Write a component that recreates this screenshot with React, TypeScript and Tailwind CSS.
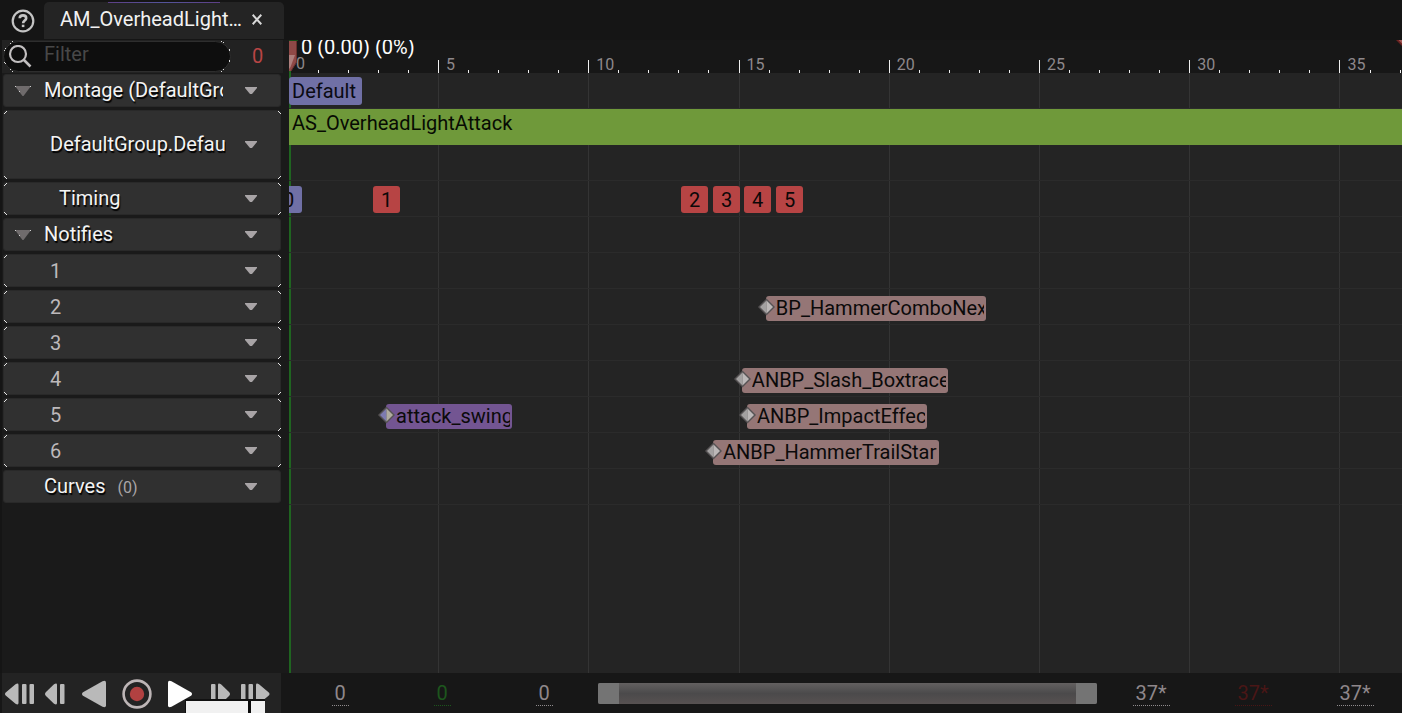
import React from "react";

const FRAMES_VISIBLE = 37.04;
const at = (frame: number) => `${((frame - 0.04) / FRAMES_VISIBLE) * 100}%`;

const MAJOR = [5, 10, 15, 20, 25, 30, 35];
const MINOR = Array.from({ length: 37 }, (_, i) => i + 1).filter((f) => f % 5 !== 0);

function Corners() {
  return (
    <span aria-hidden="true" className="pointer-events-none absolute -inset-px">
      <svg className="absolute left-0 top-0" width="4" height="4" shapeRendering="crispEdges" fill="#e6e6e6">
        <path d="M3 1h1v1h-1zM2 2h1v1h-1zM1 3h1v1h-1z" />
      </svg>
      <svg className="absolute right-0 top-0" width="4" height="4" shapeRendering="crispEdges" fill="#e6e6e6">
        <path d="M1 1h1v1h-1zM2 2h1v1h-1zM3 3h1v1h-1z" />
      </svg>
      <svg className="absolute bottom-0 left-0" width="4" height="4" shapeRendering="crispEdges" fill="#e6e6e6">
        <path d="M1 1h1v1h-1zM2 2h1v1h-1zM3 3h1v1h-1z" />
      </svg>
      <svg className="absolute bottom-0 right-0" width="4" height="4" shapeRendering="crispEdges" fill="#e6e6e6">
        <path d="M3 1h1v1h-1zM2 2h1v1h-1zM1 3h1v1h-1z" />
      </svg>
    </span>
  );
}

type Row = {
  label: string;
  kind: "group" | "slot" | "timing" | "track" | "curves";
  note?: string;
};

const ROWS: Row[] = [
  { label: "Montage (DefaultGroup)", kind: "group" },
  { label: "DefaultGroup.DefaultSlot", kind: "slot" },
  { label: "Timing", kind: "timing" },
  { label: "Notifies", kind: "group" },
  { label: "1", kind: "track" },
  { label: "2", kind: "track" },
  { label: "3", kind: "track" },
  { label: "4", kind: "track" },
  { label: "5", kind: "track" },
  { label: "6", kind: "track" },
  { label: "Curves", kind: "curves", note: "(0)" },
];

const INDENT = {
  group: "pl-10 mr-[57px] pb-[2px]",
  slot: "pl-[46px] mr-[54px] pb-[2px]",
  timing: "pl-[55px] pb-[2px]",
  track: "pl-[46px]",
  curves: "pl-10 pb-[2px]",
};

function TrackHeader({ row }: { row: Row }) {
  const bright = row.kind !== "track";
  return (
    <div className={row.kind === "slot" ? "h-[72px] pb-[2px] pt-px" : "h-9 pb-[2px] pt-px"}>
      <div className="relative flex h-full items-center rounded-[3px] border border-[#292929] bg-[#303030]">
        {row.kind === "group" && (
          <button aria-label={`Collapse ${row.label}`} className="absolute left-[11px]">
            <svg width="16" height="10" viewBox="0 0 16 10">
              <path d="M0 0H16L8.500 10H7.500Z" fill="#6f6b6c" />
              <path d="M0 0h1v1h-1zM15 0h1v1h-1zM4 5h1v1h-1z" fill="#d0d0d0" />
            </svg>
          </button>
        )}
        <div className={`min-w-0 flex-1 overflow-hidden ${INDENT[row.kind]}`}>
          <span
            className={
              bright
                ? "whitespace-nowrap text-xl leading-7 text-[#f4f4f4] [text-shadow:1px_2px_1px_#000]"
                : "whitespace-nowrap text-xl leading-7 text-[#bdb9bb]"
            }
          >
            {row.label}
          </span>
          {row.note && <span className="ml-3 text-base text-[#aaa6a8]">{row.note}</span>}
        </div>
        <button aria-label={`${row.label} options`} className="absolute right-[23px]">
          <svg width="12" height="7" viewBox="0 0 12 7">
            <path d="M0 0H12V1L7 7H5L0 1Z" fill="#a8a4a6" />
          </svg>
        </button>
        {row.kind !== "group" && row.kind !== "curves" && <Corners />}
      </div>
    </div>
  );
}

function Lane({ tall, children }: { tall?: boolean; children?: React.ReactNode }) {
  return (
    <div className={`relative border-b border-[#2b2b2b] ${tall ? "h-[72px]" : "h-9"}`}>{children}</div>
  );
}

function Marker({ frame, label, color }: { frame: number; label: string; color: string }) {
  return (
    <div
      className={`absolute top-[5px] -ml-[13px] flex h-[27px] w-[27px] items-center justify-center rounded-[3px] text-xl text-[#0c0808] ${color}`}
      style={{ left: at(frame) }}
    >
      {label}
    </div>
  );
}

function Notify({
  frame,
  label,
  width,
  color,
  left = "#a3a1a1",
  right = "#bcb8b8",
}: {
  frame: number;
  label: string;
  width: string;
  color: string;
  left?: string;
  right?: string;
}) {
  return (
    <div className={`absolute top-[7px] h-[25px] ${width}`} style={{ left: at(frame) }}>
      <div className={`h-full rounded-[3px] pl-[10px] pr-[2px] ${color}`}>
        <div className="overflow-hidden whitespace-nowrap text-xl leading-[25px] text-[#0b0a0a]">{label}</div>
      </div>
      <svg className="absolute -left-2 top-[2px]" width="17" height="18" viewBox="0 0 17 18">
        <path d="M8.500 .5 17 9 8.500 17.500 0 9Z" fill="#565354" />
        <path d="M8.500 2.500V15.500L2 9Z" fill={left} />
        <path d="M8.500 2.500V15.500L15 9Z" fill={right} />
      </svg>
    </div>
  );
}

function RangeField({ label, value, tone, wide }: { label: string; value: string; tone: string; wide?: boolean }) {
  return (
    <div className="flex w-[102px] shrink-0 justify-center">
      <input
        type="text"
        aria-label={label}
        defaultValue={value}
        className={`h-[26px] border-b border-dotted bg-transparent text-center text-xl outline-none ${wide ? "w-[37px]" : "w-[17px]"} ${tone}`}
      />
    </div>
  );
}

const GREY = "border-[#8f8b8d] text-[#8f878b]";
const CLIP = "bg-[#957676]";

export default function App() {
  return (
    <div className="flex min-h-screen flex-col overflow-hidden bg-[#151515] font-['Roboto',sans-serif]">
      <header className="flex h-10 items-end pb-px">
        <button aria-label="Help" className="mb-[6px] ml-[11px] mr-[9px]">
          <svg width="24" height="24" viewBox="0 0 24 24" fill="none" stroke="#c4c4c4" strokeWidth="2.200">
            <circle cx="12" cy="12" r="10.300" />
            <path d="M8.700 9.300C8.800 7.300 10.200 6.400 12 6.400S15.200 7.500 15.200 9.200C15.200 11.500 12.100 11.700 12.100 14.300" strokeWidth="2.600" />
            <path d="M10.800 15.700h2.600v2.400h-2.600z" fill="#c4c4c4" stroke="none" />
          </svg>
        </button>
        <div className="relative flex h-[37px] w-60 items-center rounded-t-[5px] bg-[#242424] pb-[3px] pl-4">
          <span className="absolute left-16 top-0 h-px w-28 bg-gradient-to-r from-[#5d3f86] via-[#54549a] to-[#5d3f86]" />
          <h1 className="w-[182px] whitespace-nowrap text-xl font-normal text-[#f2f2f2]">AM_OverheadLight…</h1>
          <button aria-label="Close tab" className="ml-[10px]">
            <svg width="10" height="11" viewBox="0 0 10 11" stroke="#d8d8d8" strokeWidth="2" fill="none">
              <path d="M.7 .8 9.300 10.200M9.300 .8 .7 10.200" />
            </svg>
          </button>
        </div>
      </header>

      <main className="grid flex-1 grid-cols-[289px_minmax(0,1fr)]">
        <aside className="ml-[2px] bg-[#1a1a1a]">
          <div className="mr-[6px] flex h-[33px] items-start bg-[#222222] pt-px">
            <div className="relative ml-px flex h-[31px] w-[228px] items-center rounded-full border border-[#2e2e2e] bg-[#0e0e0e]">
              <svg className="ml-[4px]" width="24" height="24" viewBox="0 0 24 24" fill="none" stroke="#c2bfc0" strokeWidth="2.200">
                <circle cx="10" cy="9" r="8" />
                <path d="M15.700 14.800 22.500 21.500" strokeWidth="2.600" />
              </svg>
              <input
                type="text"
                aria-label="Filter tracks"
                placeholder="Filter"
                className="ml-3 h-6 min-w-0 flex-1 bg-transparent pb-[6px] text-xl text-white outline-none placeholder:text-[#484848]"
              />
              <svg className="pointer-events-none absolute -left-px -top-px" width="228" height="31" fill="#dddddd" shapeRendering="crispEdges">
                <path d="M9 0h1v1h-1zM7 2h1v1h-1zM1 9h1v1h-1zM2 7h1v1h-1zM1 21h1v1h-1zM2 22h1v1h-1zM7 28h1v1h-1zM9 30h1v1h-1zM218 0h1v1h-1zM220 1h1v1h-1zM226 8h1v1h-1zM226 9h1v1h-1zM226 19h1v1h-1zM226 20h1v1h-1zM220 28h1v1h-1zM218 30h1v1h-1z" />
              </svg>
            </div>
            <span className="flex-1 pl-px text-center text-xl leading-[31px] text-[#b84545]">0</span>
          </div>
          <div className="ml-px mr-2">
            {ROWS.map((row) => (
              <TrackHeader key={row.label} row={row} />
            ))}
          </div>
        </aside>

        <section className="flex min-w-0 flex-col">
          <div className="relative h-[33px] overflow-hidden bg-[#171717]">
            {MINOR.map((f) => (
              <span key={f} className="absolute bottom-0 h-[3px] w-px bg-[#f0f0f0]" style={{ left: at(f) }} />
            ))}
            {MAJOR.map((f) => (
              <span key={f} className="absolute bottom-0 h-[13px] w-px bg-[#f0f0f0]" style={{ left: at(f) }}>
                <span className="absolute -top-[5px] left-2 text-base leading-5 text-[#8e888b]">{f}</span>
              </span>
            ))}
            <span className="absolute left-[7px] top-4 text-base leading-4 text-[#8e888b]">0</span>
            <span className="absolute -top-px left-3 whitespace-nowrap text-xl leading-4 text-white">0 (0.00) (0%)</span>
            <svg className="absolute left-0 top-0" width="9" height="33" viewBox="0 0 9 33">
              <path d="M0 0H8V22L2 31H0Z" fill="#8f4947" />
              <path d="M0 15H6L1.500 27 0 29Z" fill="#ad7f7d" />
              <path d="M7.500 1V22L2 31" stroke="#6a2f2c" fill="none" />
              <path d="M0 .5H9" stroke="#174c17" />
              <path d="M0 31H2V33H0Z" fill="#1f6420" />
            </svg>
            <svg className="absolute right-0 top-0" width="6" height="6" viewBox="0 0 6 6">
              <path d="M0 0H6V6Z" fill="#6b2220" />
              <path d="M2.500 0H6V3.500Z" fill="#a15a58" />
            </svg>
          </div>

          <div className="relative flex-1 overflow-hidden bg-[#242424]">
            {MAJOR.map((f) => (
              <span key={f} className="absolute inset-y-0 w-px bg-[#343434]" style={{ left: at(f) }} />
            ))}
            <span className="absolute inset-y-0 left-0 w-[2px] bg-[#1f6420]" />
            <Lane>
              <div className="mt-1 inline-block h-7 w-[73px] rounded-[3px] bg-[#7070a6] pl-[3px] text-xl leading-7 text-[#0a0a12]">
                Default
              </div>
            </Lane>
            <Lane tall>
              <div className="h-9 bg-[#6f993a] pl-[3px] text-xl leading-7 text-[#070b03]">AS_OverheadLightAttack</div>
            </Lane>
            <Lane>
              <Marker frame={0.01} label="0" color="bg-[#7070a6]" />
              <Marker frame={3.27} label="1" color="bg-[#b74444]" />
              <Marker frame={13.52} label="2" color="bg-[#b74444]" />
              <Marker frame={14.59} label="3" color="bg-[#b74444]" />
              <Marker frame={15.62} label="4" color="bg-[#b74444]" />
              <Marker frame={16.68} label="5" color="bg-[#b74444]" />
            </Lane>
            <Lane />
            <Lane />
            <Lane>
              <Notify frame={15.91} label="BP_HammerComboNext" width="w-[220px]" color={CLIP} />
            </Lane>
            <Lane />
            <Lane>
              <Notify frame={15.11} label="ANBP_Slash_Boxtrace" width="w-[206px]" color={CLIP} />
            </Lane>
            <Lane>
              <Notify frame={3.27} label="attack_swing" width="w-[126px]" color="bg-[#735592]" left="#7d7bb0" right="#b0aca0" />
              <Notify frame={15.28} label="ANBP_ImpactEffect" width="w-[180px]" color={CLIP} />
            </Lane>
            <Lane>
              <Notify frame={14.15} label="ANBP_HammerTrailStart" width="w-[226px]" color={CLIP} />
            </Lane>
            <Lane />
          </div>
        </section>
      </main>

      <footer className="relative grid h-10 grid-cols-[289px_minmax(0,1fr)] overflow-hidden bg-[#171717]">
        <div className="ml-[2px] mr-2 flex items-center bg-[#232323] pt-[2px]">
          <button aria-label="To front" className="flex w-[35px] justify-center">
            <svg width="30" height="22" viewBox="0 0 30 22" fill="#b9b9b9">
              <path d="M0 11Q0 10 1 9.300L10.500 1.200Q13.500 -.5 13.500 2V20Q13.500 22.500 10.500 20.800L1 12.700Q0 12 0 11Z" />
              <rect x="17" y="1" width="4.500" height="20" rx="1" />
              <rect x="24.500" y="1" width="4.500" height="20" rx="1" />
            </svg>
          </button>
          <button aria-label="Step back" className="flex w-[37px] justify-center">
            <svg width="21" height="22" viewBox="0 0 21 22" fill="#b9b9b9">
              <path d="M0 11Q0 10 1 9L9 1.300Q12 -.5 12 2V20Q12 22.500 9 20.700L1 13Q0 12 0 11Z" />
              <rect x="15" y="1" width="4.500" height="20" rx="1" />
            </svg>
          </button>
          <button aria-label="Play reverse" className="flex w-10 justify-center">
            <svg width="24" height="28" viewBox="0 0 24 28" fill="#b9b9b9">
              <path d="M0 14Q0 13 1 12.300L20.500 1.200Q24 0 24 2.500V25.500Q24 28 20.500 26.800L1 15.700Q0 15 0 14Z" />
            </svg>
          </button>
          <button aria-label="Record" className="flex w-[45px] justify-center">
            <svg width="30" height="30" viewBox="0 0 30 30">
              <circle cx="15" cy="15" r="13.400" fill="none" stroke="#bdb5b6" strokeWidth="2.600" />
              <circle cx="15" cy="15" r="7.200" fill="#b24141" />
            </svg>
          </button>
          <button aria-label="Play" className="flex w-[42px] justify-center">
            <svg width="24" height="28" viewBox="0 0 24 28" fill="#ffffff">
              <path d="M24 14Q24 13 23 12.300L3.500 1.200Q0 0 0 2.500V25.500Q0 28 3.500 26.800L23 15.700Q24 15 24 14Z" />
            </svg>
          </button>
          <button aria-label="Step forward" className="flex w-[39px] justify-center">
            <svg width="21" height="22" viewBox="0 0 21 22" fill="#b9b9b9">
              <path d="M20 11Q20 10 19 9L11 1.300Q8 -.5 8 2V20Q8 22.500 11 20.700L19 13Q20 12 20 11Z" />
              <rect x="1" y="1" width="4.500" height="20" rx="1" />
            </svg>
          </button>
          <button aria-label="To end" className="flex w-[30px] justify-center">
            <svg width="30" height="22" viewBox="0 0 30 22" fill="#b9b9b9">
              <path d="M29.500 11Q29.500 10 28.500 9.300L19 1.200Q16 -.5 16 2V20Q16 22.500 19 20.800L28.500 12.700Q29.500 12 29.500 11Z" />
              <rect x="1" y="1" width="4.500" height="20" rx="1" />
              <rect x="8.500" y="1" width="4.500" height="20" rx="1" />
            </svg>
          </button>
        </div>

        <div className="-mr-1 flex min-w-0 items-center">
          <RangeField label="Working range start" value="0" tone={GREY} />
          <RangeField label="Playback range start" value="0" tone="border-[#1d561d] text-[#1d561d]" />
          <RangeField label="View range start" value="0" tone={GREY} />
          <div className="mx-[3px] flex h-[21px] min-w-0 flex-1 overflow-hidden rounded-[2px] bg-gradient-to-b from-[#636060] via-[#4b4a4b] to-[#575151]">
            <button aria-label="Resize range start" className="w-[21px] bg-[#747474]" />
            <span className="flex-1" />
            <button aria-label="Resize range end" className="w-[21px] bg-[#747474]" />
          </div>
          <RangeField label="View range end" value="37*" tone={GREY} wide />
          <RangeField label="Playback range end" value="37*" tone="border-[#4a1616] text-[#4a1616]" wide />
          <RangeField label="Working range end" value="37*" tone={GREY} wide />
        </div>

        <div className="absolute bottom-0 left-[185px] flex h-[14px] w-20 border-l border-t-2 border-[#111111]">
          <span className="flex-1 bg-[#f1f1f1]" />
          <span className="w-[3px] bg-[#0a0a0a]" />
          <span className="w-[14px] bg-[#f1f1f1]" />
        </div>
      </footer>
    </div>
  );
}
